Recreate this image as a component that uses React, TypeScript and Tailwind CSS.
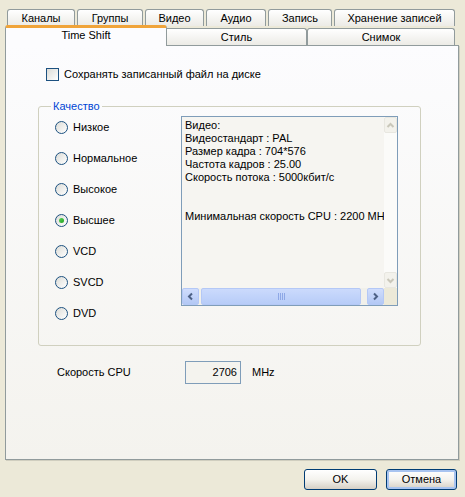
import React from 'react';

const backTabs = [
    { label: 'Каналы', w: 'w-[68px]' },
    { label: 'Группы', w: 'w-[66px]' },
    { label: 'Видео', w: 'w-[59px]' },
    { label: 'Аудио', w: 'w-[60px]' },
    { label: 'Запись', w: 'w-[64px]' },
    { label: 'Хранение записей', w: 'w-[121px]' },
];

const qualities = ['Низкое', 'Нормальное', 'Высокое', 'Высшее', 'VCD', 'SVCD', 'DVD'];

const info = [
    'Видео:',
    'Видеостандарт : PAL',
    'Размер кадра : 704*576',
    'Частота кадров : 25.00',
    'Скорость потока : 5000кбит/с',
    '\u00a0',
    '\u00a0',
    'Минимальная скорость CPU : 2200 MHz',
];

function Radio({ label, checked }: { label: string; checked?: boolean }) {
    return (
        <div className="flex items-center gap-[5px] h-[13px]">
            <span className="w-[13px] h-[13px] rounded-full border border-[#1C5180] bg-linear-to-br from-[#DCDCD7] to-white flex items-center justify-center shrink-0">
                {checked && <span className="w-[5px] h-[5px] rounded-full bg-linear-to-br from-[#55D455] to-[#21A121]"></span>}
            </span>
            <span className="leading-[13px]">{label}</span>
        </div>
    );
}

function Arrow({ dir, color }: { dir: 'up' | 'down' | 'left' | 'right'; color: string }) {
    const paths = {
        up: 'M1.5 6 L4.5 3 L7.5 6',
        down: 'M1.5 3 L4.5 6 L7.5 3',
        left: 'M6 1.5 L3 4.5 L6 7.5',
        right: 'M3 1.5 L6 4.5 L3 7.5',
    };
    return (
        <svg width="9" height="9" viewBox="0 0 9 9">
            <path d={paths[dir]} fill="none" stroke={color} strokeWidth="2" />
        </svg>
    );
}

export default function App() {
    return (
        <div className="w-[465px] h-[497px] bg-[#ECE9D8] px-[5px] flex flex-col text-[11px] text-black font-['Liberation_Sans',Arial,sans-serif]">
            {/* back tab row */}
            <div className="flex gap-[2px] pl-[2px] mt-[9px] h-[17px]">
                {backTabs.map((t) => (
                    <div key={t.label} className={`${t.w} h-[17px] border border-b-0 border-[#919B9C] rounded-t-[3px] bg-linear-to-b from-white to-[#ECEBE6] flex items-center justify-center leading-[13px]`}>
                        {t.label}
                    </div>
                ))}
            </div>

            {/* front tab row */}
            <div className="flex items-end h-[20px] -mt-[1px]">
                <div className="relative z-10 w-[162px] h-[21px] -mb-[1px] border border-b-0 border-[#919B9C] border-t-[3px] border-t-[#F0A43A] rounded-t-[3px] bg-[#FCFCFE] flex justify-center pt-[1px] leading-[13px]">
                    Time Shift
                </div>
                <div className="w-[140px] h-[17px] border border-b-0 border-l-0 border-[#919B9C] rounded-tr-[3px] bg-linear-to-b from-white to-[#ECEBE6] flex items-center justify-center leading-[13px]">
                    Стиль
                </div>
                <div className="w-[148px] h-[17px] border border-b-0 border-[#919B9C] rounded-t-[3px] bg-linear-to-b from-white to-[#ECEBE6] flex items-center justify-center leading-[13px]">
                    Снимок
                </div>
            </div>

            {/* panel */}
            <div className="w-[454px] h-[415px] border border-[#919B9C] bg-linear-to-b from-[#FCFCFE] to-[#F4F3EE] shadow-[1px_1px_0_#D0CEBF] flex flex-col">
                <div className="flex items-center gap-[5px] mt-[22px] pl-[40px] h-[13px]">
                    <span className="w-[13px] h-[13px] border border-[#1C5180] bg-linear-to-br from-[#DCDCD7] to-white shrink-0"></span>
                    <span className="leading-[13px]">Сохранять записанный файл на диске</span>
                </div>

                <fieldset className="ml-[32px] mt-[19px] w-[383px] border border-[#D0D0BF] rounded-[3px] p-0 pb-[25px]">
                    <legend className="ml-[12px] px-[2px] text-[#0046D5] leading-[13px]">Качество</legend>
                    <div className="flex mt-[3px] pl-[16px]">
                        <div className="w-[126px] flex flex-col gap-[18px] pt-[5px]">
                            {qualities.map((q) => (
                                <Radio key={q} label={q} checked={q === 'Высшее'} />
                            ))}
                        </div>

                        {/* info box */}
                        <div className="w-[217px] h-[190px] border border-[#7F9DB9] bg-[#F6F5F1] flex flex-col">
                            <div className="flex flex-1 min-h-0">
                                <div className="flex-1 min-w-0 overflow-hidden whitespace-nowrap pl-[3px] pt-[2px] leading-[13px]">
                                    {info.map((l, i) => (
                                        <div key={i}>{l}</div>
                                    ))}
                                </div>
                                <div className="w-[13px] flex flex-col bg-[#FBFBF9]">
                                    <div className="h-[16px] border border-[#E8E7E0] rounded-[2px] bg-[#F3F2EC] flex items-center justify-center">
                                        <Arrow dir="up" color="#C9C7BA" />
                                    </div>
                                    <div className="flex-1"></div>
                                    <div className="h-[16px] border border-[#E8E7E0] rounded-[2px] bg-[#F3F2EC] flex items-center justify-center">
                                        <Arrow dir="down" color="#C9C7BA" />
                                    </div>
                                </div>
                            </div>
                            <div className="h-[17px] flex bg-[#F1F0EA]">
                                <div className="w-[17px] border border-[#B4C8F6] rounded-[2px] bg-linear-to-b from-[#D0DDFC] to-[#B3C8F5] flex items-center justify-center">
                                    <Arrow dir="left" color="#4D6185" />
                                </div>
                                <div className="flex-1 flex px-[2px]">
                                    <div className="w-[160px] border border-[#B4C8F6] rounded-[2px] bg-linear-to-b from-[#CBDAFC] to-[#B7CCF8] flex items-center justify-center gap-[1px]">
                                        <span className="w-[1px] h-[7px] bg-[#8EA8E6]"></span>
                                        <span className="w-[1px] h-[7px] bg-[#8EA8E6]"></span>
                                        <span className="w-[1px] h-[7px] bg-[#8EA8E6]"></span>
                                        <span className="w-[1px] h-[7px] bg-[#8EA8E6]"></span>
                                    </div>
                                </div>
                                <div className="w-[17px] border border-[#B4C8F6] rounded-[2px] bg-linear-to-b from-[#D0DDFC] to-[#B3C8F5] flex items-center justify-center">
                                    <Arrow dir="right" color="#4D6185" />
                                </div>
                                <div className="w-[13px] bg-[#ECE9D8]"></div>
                            </div>
                        </div>
                    </div>
                </fieldset>

                <div className="flex items-center mt-[15px] pl-[51px]">
                    <span className="w-[128px]">Скорость CPU</span>
                    <div className="w-[56px] h-[23px] border border-[#7F9DB9] bg-[#F4F3EE] flex items-center justify-end pr-[3px]">2706</div>
                    <span className="ml-[11px]">MHz</span>
                </div>
            </div>

            {/* buttons */}
            <div className="flex justify-end gap-[9px] mt-[9px] pr-[3px]">
                <button className="w-[73px] h-[21px] border border-[#003C74] rounded-[3px] bg-linear-to-b from-white via-[#F4F3EE] to-[#D6D0C5] leading-[13px]">OK</button>
                <button className="w-[71px] h-[21px] border border-[#003C74] rounded-[3px] bg-linear-to-b from-white via-[#F4F3EE] to-[#D6D0C5] shadow-[inset_0_0_0_2px_#A8C4F0] leading-[13px]">Отмена</button>
            </div>
        </div>
    );
}
